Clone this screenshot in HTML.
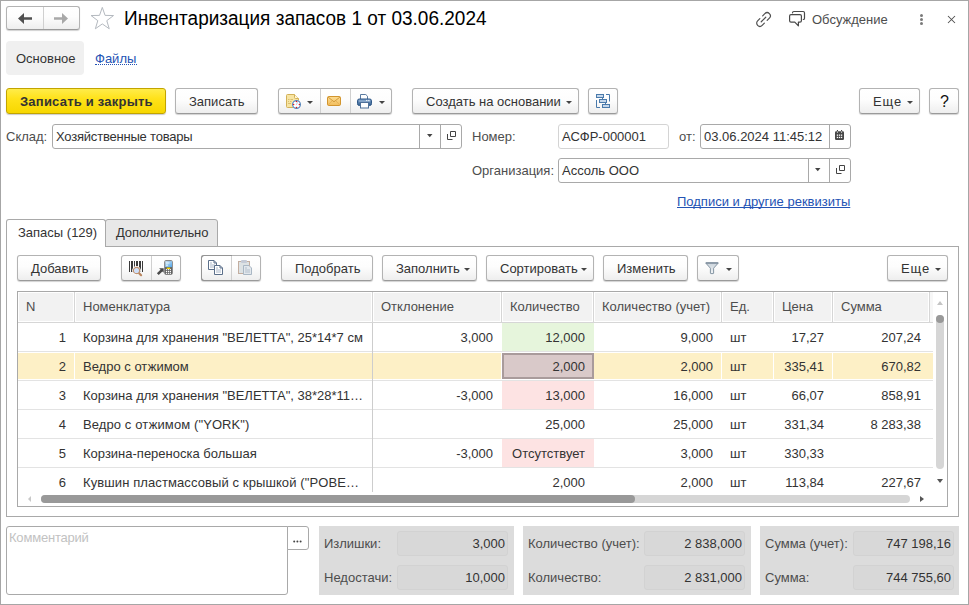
<!DOCTYPE html><html><head><meta charset="utf-8"><style>
*{margin:0;padding:0;box-sizing:border-box}
html,body{width:969px;height:605px;overflow:hidden;background:#fff;font-family:"Liberation Sans",sans-serif}
.t{position:absolute;white-space:nowrap}
.btn{position:absolute;border:1px solid #b3b3b3;border-bottom-color:#9a9a9a;border-radius:3px;background:linear-gradient(#ffffff 0%,#fdfdfd 45%,#eeeeee 100%);box-shadow:0 1px 1px rgba(0,0,0,.18)}
.fld{position:absolute;border:1px solid #a9a9a9;border-radius:3px;background:#fff}
svg{position:absolute}
</style></head><body>
<div style="position:absolute;left:0px;top:0px;width:969px;height:605px;border:1px solid #a6a6a6"></div>
<div class="btn" style="left:6px;top:6px;width:74px;height:24px;"></div>
<div style="position:absolute;left:43px;top:7px;width:1px;height:22px;background:#d0d0d0"></div>
<svg style="left:18px;top:13px" width="15" height="12" viewBox="0 0 15 12"><path d="M0 5.5 L6 0 V4.2 H14 V6.8 H6 V11 Z" fill="#505050"/></svg>
<svg style="left:54px;top:13px" width="15" height="12" viewBox="0 0 15 12"><path d="M14 5.5 L8 0 V4.2 H0 V6.8 H8 V11 Z" fill="#a8a8a8"/></svg>
<svg style="left:89px;top:6px" width="26" height="24" viewBox="0 0 26 24"><polygon points="13.30,1.40 16.07,9.38 24.52,9.55 17.79,14.66 20.24,22.75 13.30,17.92 6.36,22.75 8.81,14.66 2.08,9.55 10.53,9.38" fill="none" stroke="#b4b9bf" stroke-width="1" stroke-linejoin="miter"/></svg>
<div class="t " style="left:124px;top:9px;font-size:19px;line-height:19px;color:#000;transform:scaleY(1.08);transform-origin:0 16px">Инвентаризация запасов 1 от 03.06.2024</div>
<svg style="left:754px;top:10px" width="19" height="19" viewBox="0 0 19 19"><g transform="rotate(-45 9.5 9.5)" fill="none" stroke="#505050" stroke-width="1.2" stroke-linecap="round">
<path d="M11.5 6.3 H14.6 A3.2 3.2 0 0 1 14.6 12.7 H11.5"/><path d="M7.5 6.3 H4.4 A3.2 3.2 0 0 0 4.4 12.7 H7.5"/><path d="M6.3 9.5 H12.7"/></g></svg>
<svg style="left:788px;top:10px" width="18" height="18" viewBox="0 0 18 18"><g fill="none" stroke="#4a4a4a" stroke-width="1.2" stroke-linejoin="round" stroke-linecap="round">
<path d="M4.5 2.8 Q4.5 1.5 5.9 1.5 H15.1 Q16.5 1.5 16.5 2.9 V8.2 Q16.5 9.5 15.3 9.5"/><path d="M3 4.6 H12 Q13.4 4.6 13.4 6 V10.8 Q13.4 12.2 12 12.2 H10.4 V15.8 L6.8 12.2 H3 Q1.6 12.2 1.6 10.8 V6 Q1.6 4.6 3 4.6 Z"/></g></svg>
<div class="t " style="left:812px;top:13px;font-size:13px;line-height:13px;color:#4d4d4d;">Обсуждение</div>
<div style="position:absolute;left:920px;top:14.0px;width:3px;height:3px;border-radius:50%;background:#7a7a7a"></div>
<div style="position:absolute;left:920px;top:18.0px;width:3px;height:3px;border-radius:50%;background:#7a7a7a"></div>
<div style="position:absolute;left:920px;top:22.0px;width:3px;height:3px;border-radius:50%;background:#7a7a7a"></div>
<svg style="left:947px;top:15px" width="9" height="9" viewBox="0 0 9 9"><path d="M1 1 L8 8 M8 1 L1 8" stroke="#505050" stroke-width="1.05"/></svg>
<div style="position:absolute;left:6px;top:41px;width:78px;height:34px;background:#f0f0f0;border-radius:4px"></div>
<div class="t " style="left:16px;top:52px;font-size:13px;line-height:13px;color:#333;">Основное</div>
<div class="t " style="left:95px;top:52px;font-size:13px;line-height:13px;color:#2453b4;">Файлы</div>
<div style="position:absolute;left:95px;top:64px;width:42px;height:1px;border-top:1px dotted #2453b4"></div>
<div style="position:absolute;left:6px;top:88px;width:160px;height:26px;border:1px solid #c2a400;border-radius:3px;background:linear-gradient(#ffec4a 0%,#ffe21a 40%,#f7d700 100%);box-shadow:0 1px 1px rgba(0,0,0,.2)"></div>
<div class="t " style="left:20px;top:95px;font-size:13px;line-height:13px;color:#333;font-weight:bold;letter-spacing:0.22px">Записать и закрыть</div>
<div class="btn" style="left:175px;top:88px;width:83px;height:26px;"></div>
<div class="t " style="left:189px;top:95px;font-size:13px;line-height:13px;color:#333;">Записать</div>
<div class="btn" style="left:278px;top:88px;width:114px;height:26px;"></div>
<div style="position:absolute;left:320px;top:89px;width:1px;height:24px;background:#d0d0d0"></div>
<div style="position:absolute;left:350px;top:89px;width:1px;height:24px;background:#d0d0d0"></div>
<svg style="left:286px;top:94px" width="14" height="15" viewBox="0 0 14 15">
<path d="M1.5 0.5 H8.5 L12.5 4.5 V12.5 A1 1 0 0 1 11.5 13.5 H1.5 A1 1 0 0 1 0.5 12.5 V1.5 A1 1 0 0 1 1.5 0.5 Z" fill="#f7e4a2" stroke="#d2b058"/>
<path d="M8.5 0.5 V3.5 A1 1 0 0 0 9.5 4.5 H12.5" fill="#fff6d8" stroke="#d2b058"/>
<path d="M2 5.5 H3.5 M4.5 5.5 H7 M2 7.5 H3 M4 7.5 H5.5 M2 9.5 H5" stroke="#d9bf72" stroke-width="1"/>
</svg>
<svg style="left:291px;top:99px" width="11" height="11" viewBox="0 0 11 11">
<circle cx="5.5" cy="5.5" r="4.5" fill="#fff"/>
<circle cx="5.5" cy="5.5" r="3.9" fill="#fff" stroke="#5286bd" stroke-width="1.2"/>
<path d="M5.3 5.8 L6.6 3.4" stroke="#a8b8e0" stroke-width=".9"/>
<circle cx="5.5" cy="2.6" r=".75" fill="#e81818"/><circle cx="2.6" cy="5.5" r=".75" fill="#e81818"/><circle cx="8.4" cy="5.5" r=".75" fill="#e81818"/><circle cx="5.5" cy="8.4" r=".75" fill="#e81818"/>
</svg>
<svg style="left:307px;top:101px" width="6" height="3" viewBox="0 0 6 3"><path d="M0 0 H6 L3 3 Z" fill="#444"/></svg>
<svg style="left:327px;top:96px" width="14" height="10" viewBox="0 0 14 10">
<defs><linearGradient id="eg" x1="0" y1="0" x2="0" y2="1"><stop offset="0" stop-color="#fcdc92"/><stop offset="1" stop-color="#f2bd5c"/></linearGradient></defs>
<rect x="0.5" y="0.5" width="13" height="9" rx="1.2" fill="url(#eg)" stroke="#d2952f"/>
<path d="M1 1 L7 5.8 L13 1" fill="none" stroke="#d39a3a" stroke-width="1"/>
<path d="M1.2 9 L5.2 4.8 M12.8 9 L8.8 4.8" fill="none" stroke="#e2ac52" stroke-width=".8"/>
</svg>
<svg style="left:357px;top:94px" width="15" height="15" viewBox="0 0 15 15">
<path d="M3.5 0.5 H8.8 L10.5 2.2 V6 H3.5 Z" fill="#fff" stroke="#5a7aa0"/>
<defs><linearGradient id="pg" x1="0" y1="0" x2="0" y2="1"><stop offset="0" stop-color="#7c9ec8"/><stop offset="1" stop-color="#34608f"/></linearGradient></defs>
<rect x="0.5" y="5" width="14" height="6.5" rx="1.8" fill="url(#pg)" stroke="#2f5888"/>
<rect x="2" y="6.6" width="11" height="0.9" fill="#a9c2de"/>
<rect x="3.5" y="8.5" width="8" height="5.5" fill="#fff" stroke="#4f7099"/>
<rect x="9.2" y="5.9" width="1.1" height="1.1" fill="#fff"/><rect x="11.3" y="5.9" width="1.1" height="1.1" fill="#fff"/>
</svg>
<svg style="left:379px;top:101px" width="6" height="3" viewBox="0 0 6 3"><path d="M0 0 H6 L3 3 Z" fill="#444"/></svg>
<div class="btn" style="left:412px;top:88px;width:167px;height:26px;"></div>
<div class="t " style="left:426px;top:95px;font-size:13px;line-height:13px;color:#333;">Создать на основании</div>
<svg style="left:566px;top:101px" width="6" height="3" viewBox="0 0 6 3"><path d="M0 0 H6 L3 3 Z" fill="#444"/></svg>
<div class="btn" style="left:588px;top:88px;width:30px;height:26px;"></div>
<svg style="left:594px;top:92px" width="18" height="18" viewBox="0 0 18 18">
<g fill="none" stroke="#4a7aab" stroke-width="1">
<path d="M12 2.5 H15.5 V9.5"/><path d="M2.5 8 V15.5 H6"/>
<path d="M8.5 6 V7 M11.5 11 V12"/>
</g>
<rect x="2.5" y="2.5" width="7" height="3" fill="#c6d8ec" stroke="#4a7aab"/>
<rect x="5.5" y="7.5" width="7" height="3" fill="#c6d8ec" stroke="#4a7aab"/>
<rect x="8.5" y="12.5" width="7" height="3" fill="#c6d8ec" stroke="#4a7aab"/>
</svg>
<div class="btn" style="left:859px;top:88px;width:61px;height:26px;"></div>
<div class="t " style="left:873px;top:95px;font-size:13px;line-height:13px;color:#333;;letter-spacing:0.9px">Еще</div>
<svg style="left:907px;top:101px" width="6" height="3" viewBox="0 0 6 3"><path d="M0 0 H6 L3 3 Z" fill="#444"/></svg>
<div class="btn" style="left:929px;top:88px;width:30px;height:26px;"></div>
<div class="t " style="left:940px;top:94px;font-size:16px;line-height:16px;color:#111;">?</div>
<div class="t " style="left:6px;top:130px;font-size:13px;line-height:13px;color:#4d4d4d;">Склад:</div>
<div class="fld" style="left:52px;top:124px;width:410px;height:25px"></div>
<div style="position:absolute;left:419px;top:125px;width:1px;height:23px;background:#a9a9a9"></div>
<div style="position:absolute;left:440px;top:125px;width:1px;height:23px;background:#a9a9a9"></div>
<div class="t " style="left:56px;top:130px;font-size:13px;line-height:13px;color:#333;;letter-spacing:-0.2px">Хозяйственные товары</div>
<svg style="left:427px;top:134px" width="6" height="4" viewBox="0 0 6 4"><path d="M0 0 H5.5 L2.75 3.2 Z" fill="#444"/></svg>
<svg style="left:447px;top:131px" width="10" height="10" viewBox="0 0 10 10"><path d="M3.5 0.5 H8.5 V5.5 H3.5 Z" fill="none" stroke="#444"/><path d="M0.5 3 V8.5 H5.5" fill="none" stroke="#444"/></svg>
<div class="t " style="left:472px;top:130px;font-size:13px;line-height:13px;color:#4d4d4d;">Номер:</div>
<div class="fld" style="left:558px;top:124px;width:111px;height:25px;border-color:#d4d4d4"></div>
<div class="t " style="left:562px;top:130px;font-size:13px;line-height:13px;color:#333;">АСФР-000001</div>
<div class="t " style="left:679px;top:130px;font-size:13px;line-height:13px;color:#4d4d4d;">от:</div>
<div class="fld" style="left:700px;top:124px;width:151px;height:25px"></div>
<div style="position:absolute;left:829px;top:125px;width:1px;height:23px;background:#a9a9a9"></div>
<div class="t " style="left:704px;top:130px;font-size:13px;line-height:13px;color:#333;">03.06.2024 11:45:12</div>
<svg style="left:835px;top:130px" width="9" height="10" viewBox="0 0 9 10">
<rect x="0" y="1.2" width="9" height="8.8" rx="1.2" fill="#474747"/>
<rect x="1.9" y="0" width="1.1" height="2.2" fill="#474747"/><rect x="6" y="0" width="1.1" height="2.2" fill="#474747"/>
<rect x="1.9" y="1.6" width="1.1" height="1" fill="#fff"/><rect x="6" y="1.6" width="1.1" height="1" fill="#fff"/>
<g fill="#fff"><rect x="1.8" y="4.5" width="1.3" height="1.3"/><rect x="3.85" y="4.5" width="1.3" height="1.3"/><rect x="5.9" y="4.5" width="1.3" height="1.3"/>
<rect x="1.8" y="6.8" width="1.3" height="1.3"/><rect x="3.85" y="6.8" width="1.3" height="1.3"/><rect x="5.9" y="6.8" width="1.3" height="1.3"/></g>
</svg>
<div class="t " style="left:472px;top:164px;font-size:13px;line-height:13px;color:#4d4d4d;">Организация:</div>
<div class="fld" style="left:558px;top:158px;width:293px;height:25px"></div>
<div style="position:absolute;left:808px;top:159px;width:1px;height:23px;background:#a9a9a9"></div>
<div style="position:absolute;left:829px;top:159px;width:1px;height:23px;background:#a9a9a9"></div>
<div class="t " style="left:562px;top:164px;font-size:13px;line-height:13px;color:#333;">Ассоль ООО</div>
<svg style="left:815px;top:168px" width="6" height="4" viewBox="0 0 6 4"><path d="M0 0 H5.5 L2.75 3.2 Z" fill="#444"/></svg>
<svg style="left:836px;top:165px" width="10" height="10" viewBox="0 0 10 10"><path d="M3.5 0.5 H8.5 V5.5 H3.5 Z" fill="none" stroke="#444"/><path d="M0.5 3 V8.5 H5.5" fill="none" stroke="#444"/></svg>
<div class="t " style="left:677px;top:195px;font-size:13px;line-height:13px;color:#2453b4;text-decoration:underline;text-decoration-skip-ink:none">Подписи и другие реквизиты</div>
<div style="position:absolute;left:6px;top:246px;width:953px;height:271px;border:1px solid #a9a9a9;border-top:1px solid #a9a9a9"></div>
<div style="position:absolute;left:105px;top:219px;width:113px;height:28px;border:1px solid #a9a9a9;border-radius:3px 3px 0 0;background:#e8e8e8"></div>
<div style="position:absolute;left:6px;top:219px;width:100px;height:28px;border:1px solid #a9a9a9;border-bottom:none;border-radius:3px 3px 0 0;background:#fff"></div>
<div class="t " style="left:18px;top:226px;font-size:13px;line-height:13px;color:#333;">Запасы (129)</div>
<div class="t " style="left:116px;top:226px;font-size:13px;line-height:13px;color:#333;;letter-spacing:-0.1px">Дополнительно</div>
<div class="btn" style="left:17px;top:255px;width:84px;height:26px;"></div>
<div class="t " style="left:31px;top:262px;font-size:13px;line-height:13px;color:#333;">Добавить</div>
<div class="btn" style="left:121px;top:255px;width:60px;height:26px;"></div>
<div style="position:absolute;left:151px;top:256px;width:1px;height:24px;background:#d0d0d0"></div>
<svg style="left:128px;top:260px" width="17" height="17" viewBox="0 0 17 17">
<g fill="#3a3a3a"><rect x="1" y="1" width="1" height="11"/><rect x="3" y="1" width="2" height="11"/><rect x="6" y="1" width="1" height="11"/><rect x="8" y="1" width="2" height="11"/><rect x="11" y="1" width="2" height="11"/><rect x="14" y="1" width="1" height="11"/></g>
<circle cx="8.5" cy="10.5" r="3.6" fill="#fff" stroke="#fff" stroke-width="1.6"/>
<path d="M10.9 13 L13.1 15.2" stroke="#b98660" stroke-width="2.2" stroke-linecap="round"/>
<circle cx="8.5" cy="10.5" r="3.1" fill="#cfe0fa" stroke="#bf9270" stroke-width="1.1"/>
</svg>
<svg style="left:156px;top:258px" width="18" height="18" viewBox="0 0 18 18">
<defs><linearGradient id="sg" x1="0" y1="0" x2="1" y2="1"><stop offset="0" stop-color="#d8ecfa"/><stop offset="1" stop-color="#4fa3e6"/></linearGradient></defs>
<rect x="8.3" y="2.3" width="8.4" height="14.4" rx="1.6" fill="#626262"/>
<rect x="9.2" y="3.1" width="6.8" height="6" fill="url(#sg)"/>
<path d="M10 5 H13.5 M10 7.2 H12" stroke="#fff" stroke-width=".8"/>
<rect x="10.8" y="9.6" width="3.4" height="1.4" fill="#f5d800"/>
<g fill="#fff"><rect x="9.9" y="11.1" width="1.2" height="1.1"/><rect x="11.9" y="11.1" width="1.2" height="1.1"/><rect x="13.8" y="11.1" width="1.2" height="1.1"/>
<rect x="9.9" y="13" width="1.2" height="1.1"/><rect x="11.9" y="13" width="1.2" height="1.1"/><rect x="13.8" y="13" width="1.2" height="1.1"/>
<rect x="9.9" y="14.8" width="1.2" height="1.1"/><rect x="11.9" y="14.8" width="1.2" height="1.1"/><rect x="13.8" y="14.8" width="1.2" height="1.1"/></g>
<path d="M1.8 16.2 L6.2 11.8" stroke="#4a4a4a" stroke-width="2.6"/><path d="M3.1 10.3 H7.7 V14.8 Z" fill="#4a4a4a"/>
</svg>
<div class="btn" style="left:201px;top:255px;width:60px;height:26px;"></div>
<div style="position:absolute;left:231px;top:256px;width:1px;height:24px;background:#d0d0d0"></div>
<div style="position:absolute;left:201px;top:255px;width:31px;height:26px;border:1px solid #959595;border-right:none;border-radius:3px 0 0 3px"></div>
<svg style="left:207px;top:259px" width="17" height="17" viewBox="0 0 17 17">
<path d="M1.5 1.5 H7 L9.5 4 V10.5 H1.5 Z" fill="#fff" stroke="#5b6f8a"/><path d="M7 1.5 V4 H9.5" fill="none" stroke="#5b6f8a"/>
<path d="M3 4 H5 M3 6 H8 M3 8 H8" stroke="#a9b6c8"/>
<path d="M7.5 6.5 H13 L15.5 9 V15.5 H7.5 Z" fill="#fff" stroke="#5b6f8a"/><path d="M13 6.5 V9 H15.5" fill="none" stroke="#5b6f8a"/>
<path d="M9 9 H11 M9 11 H14 M9 13 H14" stroke="#a9b6c8"/>
</svg>
<svg style="left:237px;top:259px" width="17" height="17" viewBox="0 0 17 17">
<rect x="1.5" y="2.5" width="11" height="12" fill="#dde2e4" stroke="#c3aea0"/>
<rect x="4" y="1" width="6" height="3" rx="1" fill="#c4cad6"/>
<path d="M6.5 6.5 H12 L14.5 9 V15.5 H6.5 Z" fill="#e2e7ec" stroke="#a9b7c4"/>
<path d="M8 9 H10 M8 11 H13 M8 13 H13" stroke="#b3bfcc"/>
</svg>
<div class="btn" style="left:281px;top:255px;width:92px;height:26px;"></div>
<div class="t " style="left:295px;top:262px;font-size:13px;line-height:13px;color:#333;">Подобрать</div>
<div class="btn" style="left:382px;top:255px;width:95px;height:26px;"></div>
<div class="t " style="left:396px;top:262px;font-size:13px;line-height:13px;color:#333;">Заполнить</div>
<svg style="left:464px;top:268px" width="6" height="3" viewBox="0 0 6 3"><path d="M0 0 H6 L3 3 Z" fill="#444"/></svg>
<div class="btn" style="left:486px;top:255px;width:108px;height:26px;"></div>
<div class="t " style="left:500px;top:262px;font-size:13px;line-height:13px;color:#333;">Сортировать</div>
<svg style="left:581px;top:268px" width="6" height="3" viewBox="0 0 6 3"><path d="M0 0 H6 L3 3 Z" fill="#444"/></svg>
<div class="btn" style="left:603px;top:255px;width:85px;height:26px;"></div>
<div class="t " style="left:617px;top:262px;font-size:13px;line-height:13px;color:#333;">Изменить</div>
<div class="btn" style="left:697px;top:255px;width:42px;height:26px;"></div>
<svg style="left:705px;top:262px" width="14" height="13" viewBox="0 0 14 13"><defs><linearGradient id="fg" x1="0" y1="0" x2="0" y2="1"><stop offset="0" stop-color="#c9d2da"/><stop offset="1" stop-color="#f4f6f8"/></linearGradient></defs><path d="M0.6 0.9 H13.4 L8.6 6.2 V11.2 Q8.6 11.6 8.2 11.6 H5.8 Q5.4 11.6 5.4 11.2 V6.2 Z" fill="url(#fg)" stroke="#8595a3" stroke-width="1" stroke-linejoin="round"/><path d="M1 1 H13" stroke="#7f8f9d" stroke-width="1.4"/></svg>
<svg style="left:726px;top:268px" width="6" height="3" viewBox="0 0 6 3"><path d="M0 0 H6 L3 3 Z" fill="#444"/></svg>
<div class="btn" style="left:887px;top:255px;width:61px;height:26px;"></div>
<div class="t " style="left:901px;top:262px;font-size:13px;line-height:13px;color:#333;;letter-spacing:0.9px">Еще</div>
<svg style="left:935px;top:268px" width="6" height="3" viewBox="0 0 6 3"><path d="M0 0 H6 L3 3 Z" fill="#444"/></svg>
<div style="position:absolute;left:17px;top:291px;width:931px;height:216px;border:1px solid #a9a9a9;background:#fff"></div>
<div style="position:absolute;left:18px;top:292px;width:56px;height:30px;background:#f2f2f2;border:1px solid #fff"></div>
<div style="position:absolute;left:75px;top:292px;width:297px;height:30px;background:#f2f2f2;border:1px solid #fff"></div>
<div style="position:absolute;left:74px;top:292px;width:1px;height:30px;background:#d6d6d6"></div>
<div style="position:absolute;left:373px;top:292px;width:128px;height:30px;background:#f2f2f2;border:1px solid #fff"></div>
<div style="position:absolute;left:372px;top:292px;width:1px;height:30px;background:#d6d6d6"></div>
<div style="position:absolute;left:502px;top:292px;width:91px;height:30px;background:#f2f2f2;border:1px solid #fff"></div>
<div style="position:absolute;left:501px;top:292px;width:1px;height:30px;background:#d6d6d6"></div>
<div style="position:absolute;left:594px;top:292px;width:127px;height:30px;background:#f2f2f2;border:1px solid #fff"></div>
<div style="position:absolute;left:593px;top:292px;width:1px;height:30px;background:#d6d6d6"></div>
<div style="position:absolute;left:722px;top:292px;width:51px;height:30px;background:#f2f2f2;border:1px solid #fff"></div>
<div style="position:absolute;left:721px;top:292px;width:1px;height:30px;background:#d6d6d6"></div>
<div style="position:absolute;left:774px;top:292px;width:58px;height:30px;background:#f2f2f2;border:1px solid #fff"></div>
<div style="position:absolute;left:773px;top:292px;width:1px;height:30px;background:#d6d6d6"></div>
<div style="position:absolute;left:833px;top:292px;width:96px;height:30px;background:#f2f2f2;border:1px solid #fff"></div>
<div style="position:absolute;left:832px;top:292px;width:1px;height:30px;background:#d6d6d6"></div>
<div style="position:absolute;left:929px;top:292px;width:1px;height:30px;background:#d6d6d6"></div>
<div style="position:absolute;left:930px;top:292px;width:3px;height:30px;background:#f7f7f7"></div>
<div style="position:absolute;left:18px;top:322px;width:915px;height:1px;background:#d6d6d6"></div>
<div class="t " style="left:26px;top:300px;font-size:13px;line-height:13px;color:#4d4d4d;">N</div>
<div class="t " style="left:83px;top:300px;font-size:13px;line-height:13px;color:#4d4d4d;">Номенклатура</div>
<div class="t " style="left:381px;top:300px;font-size:13px;line-height:13px;color:#4d4d4d;">Отклонение</div>
<div class="t " style="left:510px;top:300px;font-size:13px;line-height:13px;color:#4d4d4d;">Количество</div>
<div class="t " style="left:602px;top:300px;font-size:13px;line-height:13px;color:#4d4d4d;">Количество (учет)</div>
<div class="t " style="left:730px;top:300px;font-size:13px;line-height:13px;color:#4d4d4d;">Ед.</div>
<div class="t " style="left:782px;top:300px;font-size:13px;line-height:13px;color:#4d4d4d;">Цена</div>
<div class="t " style="left:841px;top:300px;font-size:13px;line-height:13px;color:#4d4d4d;">Сумма</div>
<div style="position:absolute;left:502px;top:323px;width:92px;height:28px;background:#e6f5dc"></div>
<div style="position:absolute;left:18px;top:351px;width:915px;height:1px;background:#e3e3e3"></div>
<div class="t" style="right:903px;top:331px;font-size:13px;line-height:13px;color:#333">1</div>
<div class="t " style="left:83px;top:331px;font-size:13px;line-height:13px;color:#333;">Корзина для хранения "ВЕЛЕТТА", 25*14*7 см</div>
<div class="t" style="right:476px;top:331px;font-size:13px;line-height:13px;color:#333">3,000</div>
<div class="t" style="right:384px;top:331px;font-size:13px;line-height:13px;color:#333">12,000</div>
<div class="t" style="right:256px;top:331px;font-size:13px;line-height:13px;color:#333">9,000</div>
<div class="t " style="left:730px;top:331px;font-size:13px;line-height:13px;color:#333;">шт</div>
<div class="t" style="right:145px;top:331px;font-size:13px;line-height:13px;color:#333">17,27</div>
<div class="t" style="right:48px;top:331px;font-size:13px;line-height:13px;color:#333">207,24</div>
<div style="position:absolute;left:18px;top:353px;width:56px;height:26px;background:#fdf0c6"></div>
<div style="position:absolute;left:75px;top:353px;width:297px;height:26px;background:#fdf0c6"></div>
<div style="position:absolute;left:373px;top:353px;width:128px;height:26px;background:#fdf0c6"></div>
<div style="position:absolute;left:502px;top:353px;width:91px;height:26px;background:#fdf0c6"></div>
<div style="position:absolute;left:594px;top:353px;width:127px;height:26px;background:#fdf0c6"></div>
<div style="position:absolute;left:722px;top:353px;width:51px;height:26px;background:#fdf0c6"></div>
<div style="position:absolute;left:774px;top:353px;width:58px;height:26px;background:#fdf0c6"></div>
<div style="position:absolute;left:833px;top:353px;width:100px;height:26px;background:#fdf0c6"></div>
<div style="position:absolute;left:502px;top:353px;width:92px;height:26px;background:#d9c9c9;border:2px solid #a99b9b"></div>
<div style="position:absolute;left:18px;top:380px;width:915px;height:1px;background:#e3e3e3"></div>
<div class="t" style="right:903px;top:360px;font-size:13px;line-height:13px;color:#333">2</div>
<div class="t " style="left:83px;top:360px;font-size:13px;line-height:13px;color:#333;">Ведро с отжимом</div>
<div class="t" style="right:384px;top:360px;font-size:13px;line-height:13px;color:#333">2,000</div>
<div class="t" style="right:256px;top:360px;font-size:13px;line-height:13px;color:#333">2,000</div>
<div class="t " style="left:730px;top:360px;font-size:13px;line-height:13px;color:#333;">шт</div>
<div class="t" style="right:145px;top:360px;font-size:13px;line-height:13px;color:#333">335,41</div>
<div class="t" style="right:48px;top:360px;font-size:13px;line-height:13px;color:#333">670,82</div>
<div style="position:absolute;left:502px;top:381px;width:92px;height:28px;background:#fde3e3"></div>
<div style="position:absolute;left:18px;top:409px;width:915px;height:1px;background:#e3e3e3"></div>
<div class="t" style="right:903px;top:389px;font-size:13px;line-height:13px;color:#333">3</div>
<div class="t " style="left:83px;top:389px;font-size:13px;line-height:13px;color:#333;">Корзина для хранения "ВЕЛЕТТА", 38*28*11…</div>
<div class="t" style="right:476px;top:389px;font-size:13px;line-height:13px;color:#333">-3,000</div>
<div class="t" style="right:384px;top:389px;font-size:13px;line-height:13px;color:#333">13,000</div>
<div class="t" style="right:256px;top:389px;font-size:13px;line-height:13px;color:#333">16,000</div>
<div class="t " style="left:730px;top:389px;font-size:13px;line-height:13px;color:#333;">шт</div>
<div class="t" style="right:145px;top:389px;font-size:13px;line-height:13px;color:#333">66,07</div>
<div class="t" style="right:48px;top:389px;font-size:13px;line-height:13px;color:#333">858,91</div>
<div style="position:absolute;left:18px;top:438px;width:915px;height:1px;background:#e3e3e3"></div>
<div class="t" style="right:903px;top:418px;font-size:13px;line-height:13px;color:#333">4</div>
<div class="t " style="left:83px;top:418px;font-size:13px;line-height:13px;color:#333;;letter-spacing:0.1px">Ведро с отжимом ("YORK")</div>
<div class="t" style="right:384px;top:418px;font-size:13px;line-height:13px;color:#333">25,000</div>
<div class="t" style="right:256px;top:418px;font-size:13px;line-height:13px;color:#333">25,000</div>
<div class="t " style="left:730px;top:418px;font-size:13px;line-height:13px;color:#333;">шт</div>
<div class="t" style="right:145px;top:418px;font-size:13px;line-height:13px;color:#333">331,34</div>
<div class="t" style="right:48px;top:418px;font-size:13px;line-height:13px;color:#333">8 283,38</div>
<div style="position:absolute;left:502px;top:439px;width:92px;height:28px;background:#fde3e3"></div>
<div style="position:absolute;left:18px;top:467px;width:915px;height:1px;background:#e3e3e3"></div>
<div class="t" style="right:903px;top:447px;font-size:13px;line-height:13px;color:#333">5</div>
<div class="t " style="left:83px;top:447px;font-size:13px;line-height:13px;color:#333;">Корзина-переноска большая</div>
<div class="t" style="right:476px;top:447px;font-size:13px;line-height:13px;color:#333">-3,000</div>
<div class="t" style="right:384px;top:447px;font-size:13px;line-height:13px;color:#333">Отсутствует</div>
<div class="t" style="right:256px;top:447px;font-size:13px;line-height:13px;color:#333">3,000</div>
<div class="t " style="left:730px;top:447px;font-size:13px;line-height:13px;color:#333;">шт</div>
<div class="t" style="right:145px;top:447px;font-size:13px;line-height:13px;color:#333">330,33</div>
<div class="t" style="right:903px;top:476px;font-size:13px;line-height:13px;color:#333">6</div>
<div class="t " style="left:83px;top:476px;font-size:13px;line-height:13px;color:#333;;letter-spacing:0.1px">Кувшин пластмассовый с крышкой ("POBE…</div>
<div class="t" style="right:384px;top:476px;font-size:13px;line-height:13px;color:#333">2,000</div>
<div class="t" style="right:256px;top:476px;font-size:13px;line-height:13px;color:#333">2,000</div>
<div class="t " style="left:730px;top:476px;font-size:13px;line-height:13px;color:#333;">шт</div>
<div class="t" style="right:145px;top:476px;font-size:13px;line-height:13px;color:#333">113,84</div>
<div class="t" style="right:48px;top:476px;font-size:13px;line-height:13px;color:#333">227,67</div>
<div style="position:absolute;left:372px;top:323px;width:1px;height:169px;background:#cdcdcd"></div>
<svg style="left:27px;top:495px" width="5" height="8" viewBox="0 0 5 8"><path d="M4 1 V7 L1 4 Z" fill="#c8c8c8"/></svg>
<div style="position:absolute;left:41px;top:495px;width:869px;height:8px;background:#d6d6d6;border-radius:4px"></div>
<div style="position:absolute;left:41px;top:495px;width:594px;height:8px;background:#999;border-radius:4px"></div>
<svg style="left:920px;top:495px" width="5" height="8" viewBox="0 0 5 8"><path d="M0 1 V7 L4 4 Z" fill="#555"/></svg>
<svg style="left:936px;top:300px" width="8" height="6" viewBox="0 0 8 6"><path d="M1 5 H7 L4 1 Z" fill="#c4c4c4"/></svg>
<div style="position:absolute;left:936px;top:315px;width:8px;height:154px;background:#d6d6d6;border-radius:4px"></div>
<div style="position:absolute;left:936px;top:315px;width:8px;height:8px;background:#999;border-radius:4px"></div>
<svg style="left:936px;top:478px" width="8" height="6" viewBox="0 0 8 6"><path d="M1 1 H7 L4 5 Z" fill="#555"/></svg>
<div class="fld" style="left:6px;top:526px;width:282px;height:69px;border-radius:3px 0 3px 3px"></div>
<div class="t " style="left:9px;top:531px;font-size:13px;line-height:13px;color:#c2c2c2;letter-spacing:-0.2px">Комментарий</div>
<div class="fld" style="left:287px;top:526px;width:22px;height:24px;border-radius:0 3px 3px 0"></div>
<svg style="left:290px;top:538px" width="14" height="7" viewBox="0 0 14 7"><g fill="#444"><circle cx="4.2" cy="3.5" r="1"/><circle cx="7.4" cy="3.5" r="1"/><circle cx="10.6" cy="3.5" r="1"/></g></svg>
<div style="position:absolute;left:319px;top:526px;width:195px;height:69px;background:#dcdcdc"></div>
<div style="position:absolute;left:397px;top:531px;width:111px;height:25px;background:#d8d8d8;border:1px solid #d2d2d2;border-radius:3px"></div>
<div style="position:absolute;left:397px;top:565px;width:111px;height:25px;background:#d8d8d8;border:1px solid #d2d2d2;border-radius:3px"></div>
<div class="t " style="left:324px;top:537px;font-size:13px;line-height:13px;color:#4d4d4d;">Излишки:</div>
<div class="t " style="left:324px;top:571px;font-size:13px;line-height:13px;color:#4d4d4d;">Недостачи:</div>
<div class="t" style="right:464px;top:537px;font-size:13px;line-height:13px;color:#333">3,000</div>
<div class="t" style="right:464px;top:571px;font-size:13px;line-height:13px;color:#333">10,000</div>
<div style="position:absolute;left:523px;top:526px;width:228px;height:69px;background:#dcdcdc"></div>
<div style="position:absolute;left:644px;top:531px;width:101px;height:25px;background:#d8d8d8;border:1px solid #d2d2d2;border-radius:3px"></div>
<div style="position:absolute;left:644px;top:565px;width:101px;height:25px;background:#d8d8d8;border:1px solid #d2d2d2;border-radius:3px"></div>
<div class="t " style="left:528px;top:537px;font-size:13px;line-height:13px;color:#4d4d4d;">Количество (учет):</div>
<div class="t " style="left:528px;top:571px;font-size:13px;line-height:13px;color:#4d4d4d;">Количество:</div>
<div class="t" style="right:227px;top:537px;font-size:13px;line-height:13px;color:#333">2 838,000</div>
<div class="t" style="right:227px;top:571px;font-size:13px;line-height:13px;color:#333">2 831,000</div>
<div style="position:absolute;left:760px;top:526px;width:199px;height:69px;background:#dcdcdc"></div>
<div style="position:absolute;left:853px;top:531px;width:101px;height:25px;background:#d8d8d8;border:1px solid #d2d2d2;border-radius:3px"></div>
<div style="position:absolute;left:853px;top:565px;width:101px;height:25px;background:#d8d8d8;border:1px solid #d2d2d2;border-radius:3px"></div>
<div class="t " style="left:765px;top:537px;font-size:13px;line-height:13px;color:#4d4d4d;">Сумма (учет):</div>
<div class="t " style="left:765px;top:571px;font-size:13px;line-height:13px;color:#4d4d4d;">Сумма:</div>
<div class="t" style="right:18px;top:537px;font-size:13px;line-height:13px;color:#333">747 198,16</div>
<div class="t" style="right:18px;top:571px;font-size:13px;line-height:13px;color:#333">744 755,60</div>
</body></html>
